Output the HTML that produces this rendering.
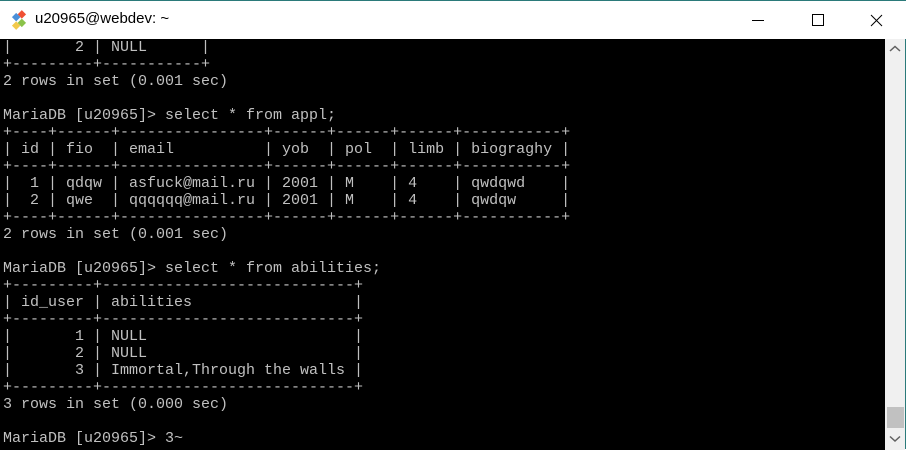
<!DOCTYPE html>
<html><head><meta charset="utf-8"><style>
html,body{margin:0;padding:0;width:907px;height:449px;overflow:hidden;background:#fff}
#win{position:absolute;left:0;top:0;width:906px;height:449px;border-right:1px solid #2b7a7a;border-top:1px solid #2b7a7a;box-sizing:border-box}
#title{position:absolute;left:0;top:0;width:906px;height:38px;background:#fff}
#title .t{position:absolute;left:35px;top:9px;font:15px "Liberation Sans",sans-serif;color:#000}
#term{position:absolute;left:0;top:38px;width:885px;height:411px;background:#000}
pre{margin:0;position:absolute;left:3px;top:0;font:15px/17px "Liberation Mono",monospace;color:#c0c0c0}
#sb{position:absolute;left:885px;top:38px;width:20px;height:411px;background:#f0f0f0}
#thumb{position:absolute;left:2px;top:368px;width:17px;height:21px;background:#c1c1c1}
</style></head><body><div id="win">
<div id="title">
<svg style="position:absolute;left:9px;top:9px" width="20" height="20" viewBox="0 0 20 20">
<rect x="5" y="1" width="6" height="6" fill="#f05033" transform="rotate(45 10 10)"/>
<rect x="11" y="7" width="6" height="6" fill="#8bc34a" transform="rotate(45 10 10)"/>
<rect x="3" y="7" width="6" height="6" fill="#4a90d9" transform="rotate(45 10 10)"/>
<rect x="9" y="13" width="6" height="6" fill="#f2c94c" transform="rotate(45 10 10)"/>
</svg>
<div class="t">u20965@webdev: ~</div>
<svg style="position:absolute;left:740px;top:10px" width="160" height="20">
<line x1="12" y1="9.5" x2="24" y2="9.5" stroke="#000"/>
<rect x="72.5" y="3.5" width="11" height="11" fill="none" stroke="#000"/>
<path d="M131 4L142 15M142 4L131 15" stroke="#000"/>
</svg>
</div>
<div id="term"><pre>|       2 | NULL      |
+---------+-----------+
2 rows in set (0.001 sec)

MariaDB [u20965]&gt; select * from appl;
+----+------+----------------+------+------+------+-----------+
| id | fio  | email          | yob  | pol  | limb | biograghy |
+----+------+----------------+------+------+------+-----------+
|  1 | qdqw | asfuck@mail.ru | 2001 | M    | 4    | qwdqwd    |
|  2 | qwe  | qqqqqq@mail.ru | 2001 | M    | 4    | qwdqw     |
+----+------+----------------+------+------+------+-----------+
2 rows in set (0.001 sec)

MariaDB [u20965]&gt; select * from abilities;
+---------+----------------------------+
| id_user | abilities                  |
+---------+----------------------------+
|       1 | NULL                       |
|       2 | NULL                       |
|       3 | Immortal,Through the walls |
+---------+----------------------------+
3 rows in set (0.000 sec)

MariaDB [u20965]&gt; 3~</pre></div>
<div id="sb">
<svg style="position:absolute;left:4px;top:6px" width="12" height="8"><path d="M1 6L6 1.5L11 6" stroke="#606060" stroke-width="1.5" fill="none"/></svg>
<div id="thumb"></div>
<svg style="position:absolute;left:4px;top:396px" width="12" height="8"><path d="M1 1.5L6 6L11 1.5" stroke="#606060" stroke-width="1.5" fill="none"/></svg>
</div>
</div></body></html>
